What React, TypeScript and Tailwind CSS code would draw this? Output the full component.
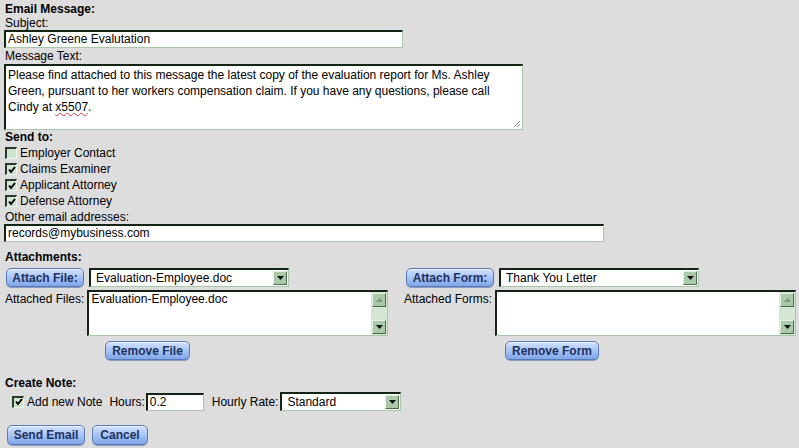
import React from "react";

function BlueButton({ label, className = "" }: { label: string; className?: string }) {
  return (
    <button
      className={`h-[19px] whitespace-nowrap rounded-[5px] border border-[#5b79b5] bg-gradient-to-b from-[#d3e3fd] via-[#a6c4f6] to-[#7fa6ea] px-0 text-center text-[12px] leading-[16px] font-bold text-[#1e305e] shadow-[inset_0_1px_0_#eef4ff,0_1px_0_#8a9cc0] ${className}`}
    >
      {label}
    </button>
  );
}

function ArrowBox({ dir = "down" }: { dir?: "down" | "up" }) {
  return (
    <span className="flex h-[14px] w-[14px] items-center justify-center border border-t-[#e4f0e4] border-l-[#e4f0e4] border-b-[#4c6a4c] border-r-[#4c6a4c] bg-[#a9c9a9]">
      <svg width="7" height="4" viewBox="0 0 7 4">
        {dir === "down" ? (
          <path d="M0 0h7L3.5 4z" fill="#111" />
        ) : (
          <path d="M0 4h7L3.5 0z" fill="#7a967a" />
        )}
      </svg>
    </span>
  );
}

function Field({ value, className = "" }: { value: string; className?: string }) {
  return (
    <div
      className={`h-[18px] border-t-2 border-l-2 border-b border-r border-t-[#142414] border-l-[#142414] border-b-[#a8c6a8] border-r-[#a8c6a8] bg-white pl-[2px] text-[12px] leading-[15px] ${className}`}
    >
      {value}
    </div>
  );
}

function Select({ value, className = "" }: { value: string; className?: string }) {
  return (
    <div
      className={`flex h-[19px] items-center justify-between border-t-2 border-l-2 border-b border-r border-t-[#142414] border-l-[#142414] border-b-[#a8c6a8] border-r-[#a8c6a8] bg-white pl-[5px] pr-[1px] text-[12px] ${className}`}
    >
      <span>{value}</span>
      <ArrowBox />
    </div>
  );
}

function ListBox({ value }: { value?: string }) {
  return (
    <div className="flex h-[46px] w-[301px] border-t-2 border-l-2 border-b border-r border-t-[#142414] border-l-[#142414] border-b-[#a8c6a8] border-r-[#a8c6a8] bg-white">
      <div className="flex-1 pl-[2px] text-[12px] leading-[15px]">{value}</div>
      <div className="flex w-[16px] flex-col items-center justify-between bg-[#d4e6d4] py-[1px]">
        <ArrowBox dir="up" />
        <ArrowBox dir="down" />
      </div>
    </div>
  );
}

function Check({ checked }: { checked: boolean }) {
  return (
    <span className="flex h-[12px] w-[12px] items-center justify-center border-t-2 border-l-2 border-b border-r border-t-[#2a3a2a] border-l-[#2a3a2a] border-b-[#eef6ee] border-r-[#eef6ee] bg-[#cfe5cf]">
      {checked && (
        <svg width="8" height="8" viewBox="0 0 8 8">
          <path d="M1 3.5 3 6 7 1" stroke="#000" strokeWidth="2" fill="none" />
        </svg>
      )}
    </span>
  );
}

export default function App() {
  const recipients = [
    { label: "Employer Contact", checked: false },
    { label: "Claims Examiner", checked: true },
    { label: "Applicant Attorney", checked: true },
    { label: "Defense Attorney", checked: true },
  ];

  return (
    <div className="h-[448px] w-[799px] overflow-hidden bg-[#dddddd] pl-[5px] pt-[2px] font-['Liberation_Sans',Arial,sans-serif] text-[12px] leading-[14px] text-black">
      <p className="font-bold">Email Message:</p>
      <p>Subject:</p>
      <Field value="Ashley Greene Evalutation" className="ml-[-1px] w-[399px]" />
      <p className="mt-[1px]">Message Text:</p>
      <div className="relative ml-[-1px] mt-[1px] h-[66px] w-[519px] border-t-2 border-l-2 border-b border-r border-t-[#142414] border-l-[#142414] border-b-[#a8c6a8] border-r-[#a8c6a8] bg-white pl-[2px] pt-[1px] text-[12px] leading-[16px]">
        Please find attached to this message the latest copy of the evaluation report for Ms. Ashley
        <br />
        Green, pursuant to her workers compensation claim. If you have any questions, please call
        <br />
        Cindy at <span className="underline decoration-wavy decoration-[#d04040] decoration-1">x5507</span>.
        <svg className="absolute bottom-[1px] right-[1px]" width="8" height="8" viewBox="0 0 8 8">
          <path d="M7 1 1 7M7 4 4 7" stroke="#888" strokeWidth="1" />
        </svg>
      </div>
      <p className="font-bold">Send to:</p>
      <div className="mt-[1px] flex flex-col">
        {recipients.map((r) => (
          <div key={r.label} className="flex h-[16px] items-center gap-[3px]">
            <Check checked={r.checked} />
            <span>{r.label}</span>
          </div>
        ))}
      </div>
      <p className="mt-[1px]">Other email addresses:</p>
      <Field value="records@mybusiness.com" className="ml-[-1px] w-[600px]" />

      <p className="mt-[8px] font-bold">Attachments:</p>
      <div className="mt-[4px] grid grid-cols-[399px_1fr]">
        <div className="flex flex-col">
          <div className="flex items-center gap-[5px]">
            <BlueButton label="Attach File:" className="ml-[1px] w-[78px]" />
            <Select value="Evaluation-Employee.doc" className="w-[200px]" />
          </div>
          <div className="mt-[3px] flex gap-[3px]">
            <span className="whitespace-nowrap pt-[2px]">Attached Files:</span>
            <ListBox value="Evaluation-Employee.doc" />
          </div>
          <BlueButton label="Remove File" className="ml-[100px] mt-[5px] w-[85px]" />
        </div>
        <div className="flex flex-col">
          <div className="flex items-center gap-[5px]">
            <BlueButton label="Attach Form:" className="ml-[2px] w-[88px]" />
            <Select value="Thank You Letter" className="w-[200px]" />
          </div>
          <div className="mt-[3px] flex gap-[3px]">
            <span className="whitespace-nowrap pt-[2px]">Attached Forms:</span>
            <ListBox />
          </div>
          <BlueButton label="Remove Form" className="ml-[101px] mt-[5px] w-[94px]" />
        </div>
      </div>

      <p className="mt-[16px] font-bold">Create Note:</p>
      <div className="mt-[2px] flex items-center">
        <span className="ml-[7px]">
          <Check checked />
        </span>
        <span className="ml-[3px]">Add new Note</span>
        <span className="ml-[7px]">Hours:</span>
        <Field value="0.2" className="ml-[1px] w-[58px]" />
        <span className="ml-[8px]">Hourly Rate:</span>
        <Select value="Standard" className="ml-[2px] w-[121px] pl-[5px]" />
      </div>

      <div className="mt-[14px] flex gap-[7px]">
        <BlueButton label="Send Email" className="ml-[2px] h-[20px] w-[78px]" />
        <BlueButton label="Cancel" className="h-[20px] w-[56px]" />
      </div>
    </div>
  );
}
